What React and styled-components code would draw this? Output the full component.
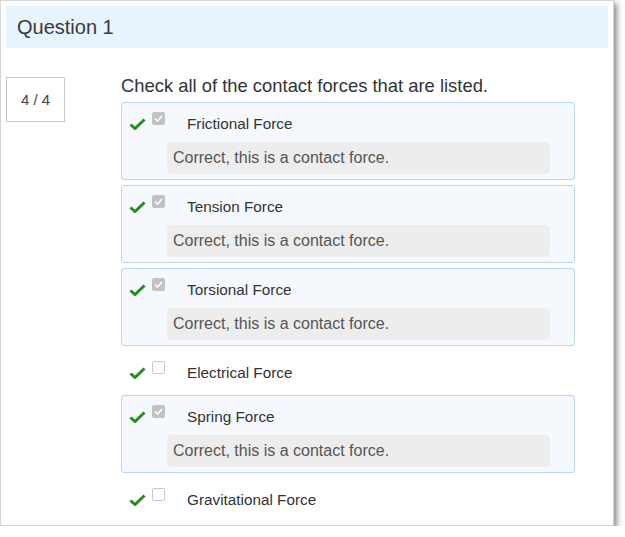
import React from "react";
import styled, { createGlobalStyle } from "styled-components";

const Global = createGlobalStyle`
  html, body { margin: 0; padding: 0; background: #fff; }
  body { font-family: "Liberation Sans", Arial, sans-serif; color: #333; }
`;

const Window = styled.div`
  width: 602px;
  height: 514px;
  padding: 5px;
  border: 1px solid #d6d6d6;
  background: #fff;
  box-shadow: 3px 3px 6px rgba(0, 0, 0, 0.45);
  overflow: hidden;
`;

const Header = styled.div`
  height: 42px;
  background: #e7f3fd;
  display: flex;
  align-items: center;
  padding-left: 11px;
  font-size: 20px;
  color: #3a3a3a;
`;

const Body = styled.div`
  display: flex;
  gap: 56px;
  padding-top: 26px;
`;

const Score = styled.div`
  width: 57px;
  height: 43px;
  margin-top: 3px;
  border: 1px solid #c8c8c8;
  display: flex;
  align-items: center;
  justify-content: center;
  font-size: 15px;
  color: #444;
  flex-shrink: 0;
`;

const Content = styled.div`
  width: 454px;
  display: flex;
  flex-direction: column;
`;

const Prompt = styled.div`
  font-size: 18.4px;
  line-height: 24px;
  color: #333;
  margin-bottom: 4px;
`;

const OptionList = styled.div`
  display: flex;
  flex-direction: column;
  gap: 5px;
`;

const OptionBox = styled.div`
  border: 1px solid ${(p) => (p.$selected ? "#b7d6ef" : "transparent")};
  background: ${(p) => (p.$selected ? "#f5f9fd" : "transparent")};
  border-radius: 3px;
  padding: 0 24px ${(p) => (p.$selected ? "5px" : "0")} 0;
`;

const Row = styled.div`
  height: ${(p) => (p.$selected ? "39px" : "37px")};
  display: flex;
  align-items: flex-start;
`;

const CheckMark = styled.svg`
  width: 17px;
  height: 12px;
  margin: 15px 0 0 7px;
  flex-shrink: 0;
`;

const Box = styled.span`
  width: 11px;
  height: 11px;
  margin: 9px 0 0 6px;
  border: 1px solid ${(p) => (p.$checked ? "#c2c2c2" : "#c8c8c8")};
  background: ${(p) => (p.$checked ? "#c2c2c2" : "#fff")};
  border-radius: 2px;
  display: flex;
  align-items: center;
  justify-content: center;
  flex-shrink: 0;
`;

const Label = styled.span`
  margin-left: 22px;
  padding-top: 12px;
  font-size: 15.3px;
  line-height: 18px;
  color: #333;
`;

const Feedback = styled.div`
  margin-left: 45px;
  height: 32px;
  border-radius: 5px;
  background: #ededed;
  display: flex;
  align-items: center;
  padding-left: 6px;
  font-size: 16px;
  color: #555;
`;

const options = [
  { label: "Frictional Force", selected: true },
  { label: "Tension Force", selected: true },
  { label: "Torsional Force", selected: true },
  { label: "Electrical Force", selected: false },
  { label: "Spring Force", selected: true },
  { label: "Gravitational Force", selected: false },
];

function Check() {
  return (
    <CheckMark viewBox="0 0 17 12">
      <path d="M1.5 6.5 L6 10.5 L15.5 1.5" fill="none" stroke="#2b8a1e" strokeWidth="3" strokeLinejoin="miter" />
    </CheckMark>
  );
}

export default function App() {
  return (
    <>
      <Global />
      <Window>
        <Header>Question 1</Header>
        <Body>
          <Score>4 / 4</Score>
          <Content>
            <Prompt>Check all of the contact forces that are listed.</Prompt>
            <OptionList>
              {options.map((o) => (
                <OptionBox key={o.label} $selected={o.selected}>
                  <Row $selected={o.selected}>
                    <Check />
                    <Box $checked={o.selected}>
                      {o.selected && (
                        <svg width="9" height="7" viewBox="0 0 9 7">
                          <path d="M1 3.5 L3.5 6 L8 1" fill="none" stroke="#fff" strokeWidth="1.6" />
                        </svg>
                      )}
                    </Box>
                    <Label>{o.label}</Label>
                  </Row>
                  {o.selected && <Feedback>Correct, this is a contact force.</Feedback>}
                </OptionBox>
              ))}
            </OptionList>
          </Content>
        </Body>
      </Window>
    </>
  );
}
